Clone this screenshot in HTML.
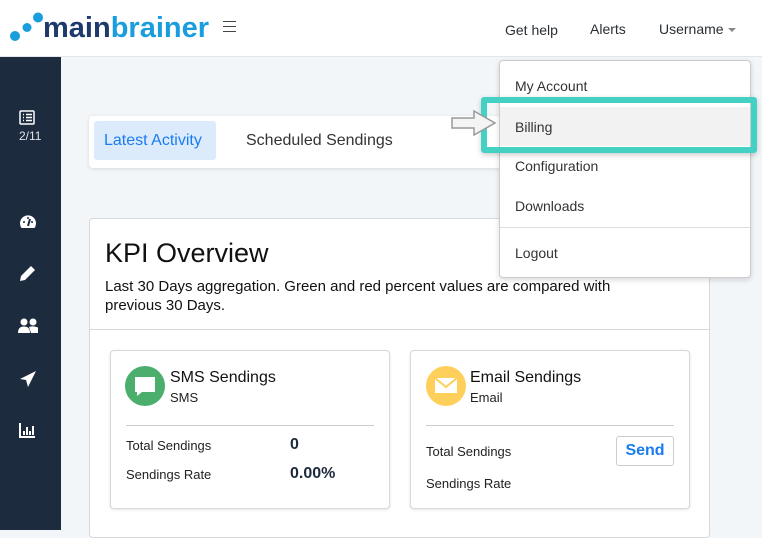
<!DOCTYPE html>
<html><head><style>
*{margin:0;padding:0;box-sizing:border-box}
body{width:762px;height:530px;overflow:hidden;font-family:"Liberation Sans",sans-serif;background:#f3f6f9;position:relative;color:#212529}
.a{position:absolute}
.top{left:0;top:0;width:762px;height:57px;background:#fff;border-bottom:1px solid #e3e6ea}
.side{left:0;top:57px;width:61px;height:473px;background:#1d2b3e}
.nav{font-size:14px;color:#2a2f35}
.card{background:#fff;border:1px solid #d5d9de;border-radius:4px}
.dd{left:499px;top:60px;width:252px;height:218px;background:#fff;border:1px solid #ccc;border-radius:4px;box-shadow:0 2px 6px rgba(0,0,0,.15)}
.di{position:absolute;left:15px;font-size:14px;color:#333}
.lbl{font-size:13px;color:#222}
</style></head><body>
<div class="a top"></div>
<svg class="a" style="left:9px;top:12px" width="36" height="34"><circle cx="29" cy="5.5" r="5" fill="#1a9ddc"/><circle cx="18" cy="15.5" r="4.5" fill="#1a9ddc"/><circle cx="6" cy="24" r="5" fill="#1a9ddc"/></svg>
<div class="a" style="left:43px;top:12px;font-size:29px;font-weight:bold;letter-spacing:0"><span style="color:#1e3a6b">main</span><span style="color:#1a9ddc">brainer</span></div>
<div class="a" style="left:223px;top:21px;width:13px;height:11px;border-top:1.5px solid #444;border-bottom:1.5px solid #444"><div style="margin-top:3.5px;border-top:1.5px solid #444"></div></div>
<div class="a nav" style="left:505px;top:22px">Get help</div>
<div class="a nav" style="left:590px;top:21px">Alerts</div>
<div class="a nav" style="left:659px;top:21px">Username</div>
<div class="a" style="left:728px;top:28px;border:4px solid transparent;border-top:4px solid #888"></div>
<div class="a side"></div>
<svg class="a" style="left:19px;top:110px" width="16" height="16"><rect x="1" y="1" width="14" height="13" rx="1" fill="none" stroke="#fff" stroke-width="1.5"/><path d="M4 4.5h1M7 4.5h6M4 7.5h1M7 7.5h6M4 10.5h1M7 10.5h6" stroke="#fff" stroke-width="1.5"/></svg>
<div class="a" style="left:19px;top:129px;font-size:12px;color:#dfe3e8">2/11</div>
<svg class="a" style="left:19px;top:214px" width="18" height="16"><path d="M2.5 14A8 8 0 1 1 15.5 14Z" fill="#fff"/><path d="M9 12L11 5" stroke="#1d2b3e" stroke-width="2"/><circle cx="5" cy="8" r="1" fill="#1d2b3e"/><circle cx="13" cy="8" r="1" fill="#1d2b3e"/><circle cx="9" cy="4" r="1" fill="#1d2b3e"/></svg>
<svg class="a" style="left:19px;top:264px" width="18" height="18"><path d="M1 17L2 12L12 2L16 6L6 16Z" fill="#fff"/></svg>
<svg class="a" style="left:18px;top:318px" width="21" height="16"><circle cx="6" cy="4" r="3.5" fill="#fff"/><circle cx="15" cy="4" r="3.5" fill="#fff"/><path d="M0 15Q0 8.5 6 8.5Q12 8.5 12 15ZM11 9Q15 7.5 20 9.5L20 15L13 15Z" fill="#fff"/></svg>
<svg class="a" style="left:19px;top:370px" width="18" height="18"><path d="M17 1L1 9L7 10L9 17Z" fill="#fff"/></svg>
<svg class="a" style="left:19px;top:423px" width="17" height="15"><path d="M1 0V14H16" stroke="#fff" stroke-width="2" fill="none"/><path d="M5 8v4M8 4v8M11 8v4M14 3v9" stroke="#fff" stroke-width="2"/></svg>
<div class="a card" style="left:89px;top:116px;width:420px;height:52px;border:none;box-shadow:0 1px 4px rgba(0,0,0,.12)"></div>
<div class="a" style="left:94px;top:121px;width:122px;height:39px;background:#dcebfb;border-radius:3px"></div>
<div class="a" style="left:104px;top:132px;font-size:16px;color:#1a7cf0">Latest Activity</div>
<div class="a" style="left:246px;top:132px;font-size:16px;color:#333">Scheduled Sendings</div>
<div class="a card" style="left:89px;top:218px;width:621px;height:320px"></div>
<div class="a" style="left:105px;top:238px;font-size:27px;color:#111">KPI Overview</div>
<div class="a" style="left:105px;top:277px;font-size:15px;line-height:19px;color:#111;width:560px">Last 30 Days aggregation. Green and red percent values are compared with previous 30 Days.</div>
<div class="a" style="left:89px;top:329px;width:621px;border-top:1px solid #d5d9de"></div>
<div class="a card" style="left:110px;top:350px;width:280px;height:159px;box-shadow:0 1px 3px rgba(0,0,0,.1)"></div>
<svg class="a" style="left:125px;top:366px" width="40" height="40"><circle cx="20" cy="20" r="20" fill="#4bae6c"/><path d="M10 11h20v15H17l-5 4v-4h-2z" fill="#fff"/></svg>
<div class="a" style="left:170px;top:369px;font-size:16px;color:#111">SMS Sendings</div>
<div class="a lbl" style="left:170px;top:390px">SMS</div>
<div class="a" style="left:126px;top:425px;width:248px;border-top:1px solid #ccc"></div>
<div class="a lbl" style="left:126px;top:438px">Total Sendings</div>
<div class="a" style="left:290px;top:436px;font-size:16px;font-weight:bold;color:#1e2a3a">0</div>
<div class="a lbl" style="left:126px;top:467px">Sendings Rate</div>
<div class="a" style="left:290px;top:465px;font-size:16px;font-weight:bold;color:#1e2a3a">0.00%</div>
<div class="a card" style="left:410px;top:350px;width:280px;height:159px;box-shadow:0 1px 3px rgba(0,0,0,.1)"></div>
<svg class="a" style="left:426px;top:366px" width="40" height="40"><circle cx="20" cy="20" r="20" fill="#ffcf5c"/><rect x="9" y="12" width="22" height="15" fill="#fff"/><path d="M9 12L20 21L31 12" stroke="#ffcf5c" stroke-width="2" fill="none"/></svg>
<div class="a" style="left:470px;top:369px;font-size:16px;color:#111">Email Sendings</div>
<div class="a lbl" style="left:470px;top:390px">Email</div>
<div class="a" style="left:426px;top:425px;width:248px;border-top:1px solid #ccc"></div>
<div class="a lbl" style="left:426px;top:444px">Total Sendings</div>
<div class="a" style="left:616px;top:436px;width:58px;height:30px;border:1px solid #ccc;border-radius:3px;font-size:16px;font-weight:bold;color:#1a7cf0;text-align:center;line-height:28px">Send</div>
<div class="a lbl" style="left:426px;top:476px">Sendings Rate</div>
<div class="a dd">
<div class="di" style="top:17px">My Account</div>
<div style="position:absolute;left:0;top:46px;width:250px;height:39px;background:#f2f2f2"></div>
<div class="di" style="top:58px">Billing</div>
<div class="di" style="top:97px">Configuration</div>
<div class="di" style="top:137px">Downloads</div>
<div style="position:absolute;left:0;top:166px;width:250px;border-top:1px solid #ddd"></div>
<div class="di" style="top:184px">Logout</div>
</div>
<div class="a" style="left:481px;top:97px;width:276px;height:56px;border:6px solid #45d0c4;border-radius:3px;box-shadow:0 2px 6px rgba(0,0,0,.2)"></div>
<svg class="a" style="left:449px;top:108px" width="50" height="32"><path d="M3 10h22V3l21 12-21 12v-7H3z" fill="#f4f4f4" stroke="#999" stroke-width="1.5"/></svg>
</body></html>
